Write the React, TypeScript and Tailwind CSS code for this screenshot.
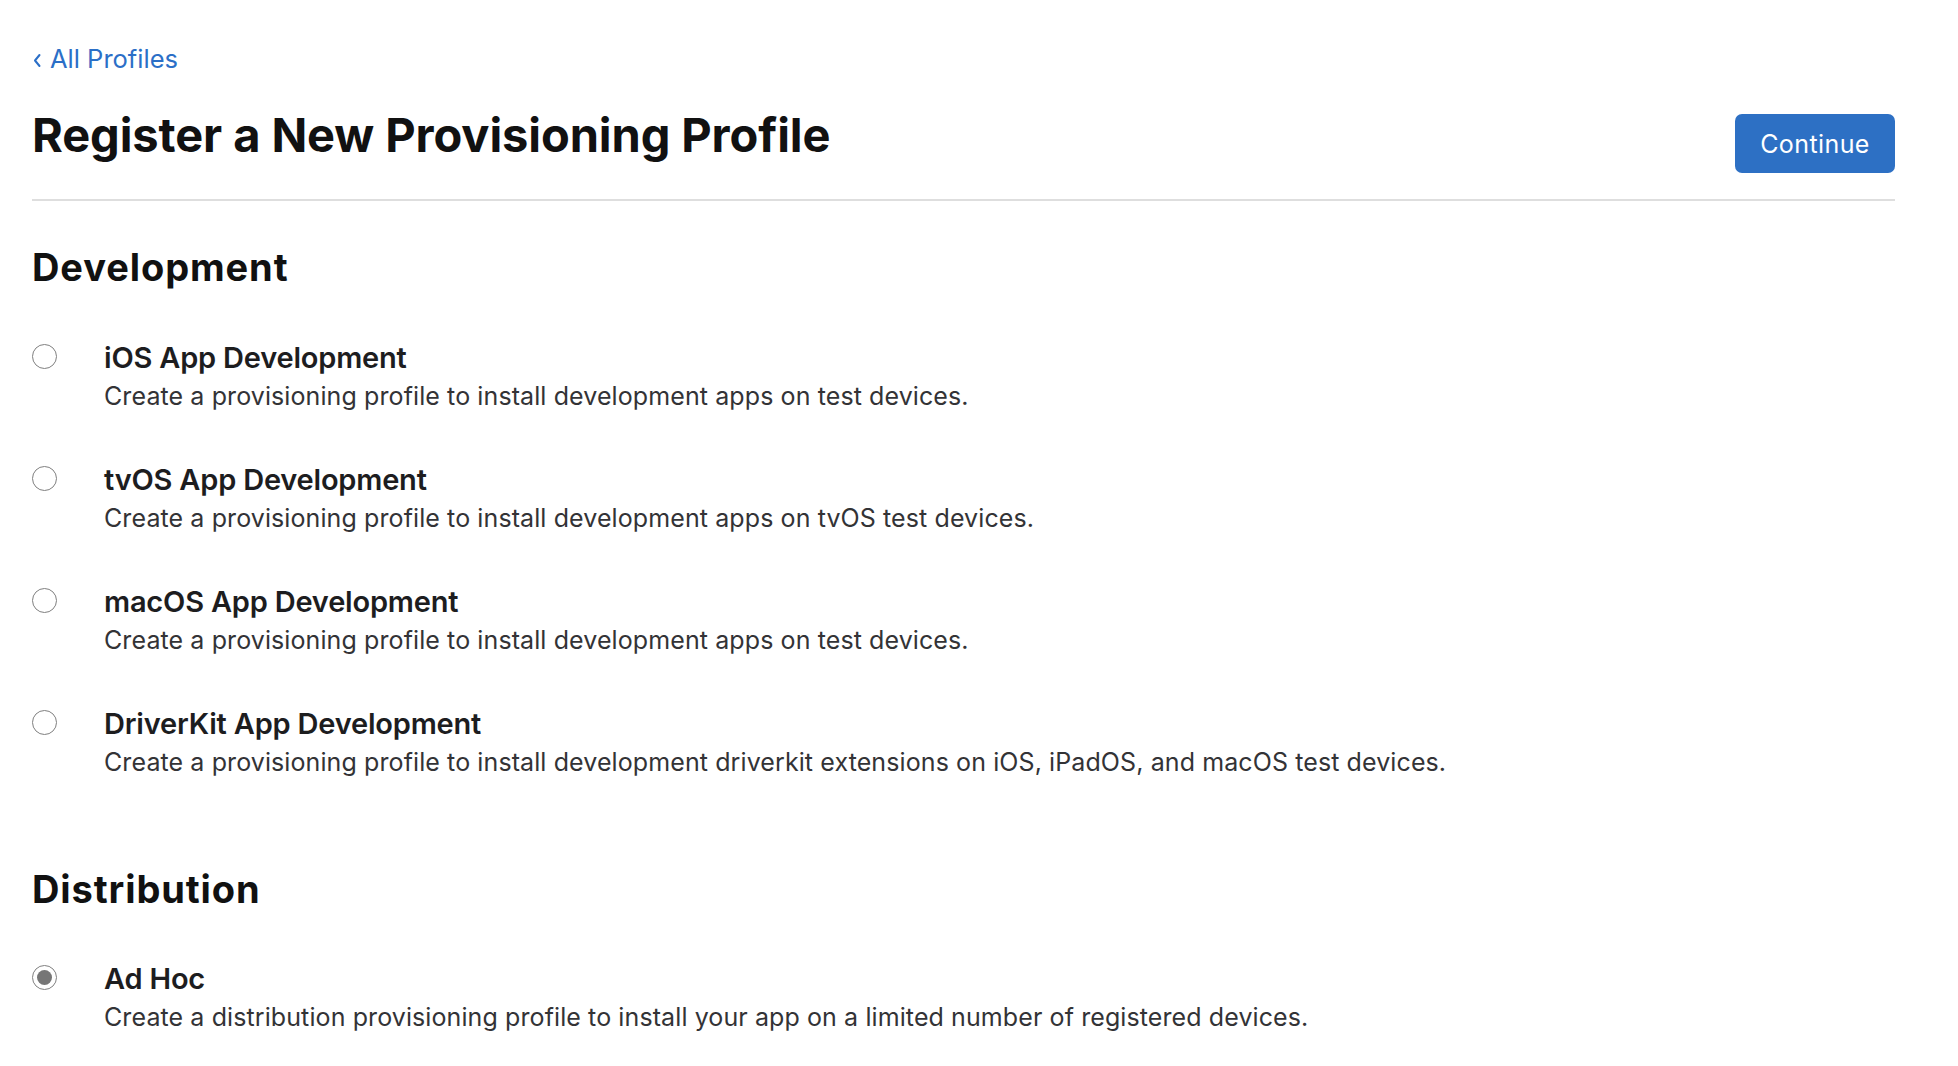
import React from "react";

type Option = { title: string; desc: string; checked?: boolean };

const dev: Option[] = [
  { title: "iOS App Development", desc: "Create a provisioning profile to install development apps on test devices." },
  { title: "tvOS App Development", desc: "Create a provisioning profile to install development apps on tvOS test devices." },
  { title: "macOS App Development", desc: "Create a provisioning profile to install development apps on test devices." },
  { title: "DriverKit App Development", desc: "Create a provisioning profile to install development driverkit extensions on iOS, iPadOS, and macOS test devices." },
];

const dist: Option[] = [
  { title: "Ad Hoc", desc: "Create a distribution provisioning profile to install your app on a limited number of registered devices.", checked: true },
];

function Radio({ checked }: { checked?: boolean }) {
  return (
    <div className="mt-[4px] flex h-[25px] w-[25px] shrink-0 items-center justify-center rounded-full border-[1.5px] border-[#7f7f7f] bg-white">
      {checked && <div className="h-[15px] w-[15px] rounded-full bg-[#767676]" />}
    </div>
  );
}

function Row({ o }: { o: Option }) {
  return (
    <div className="flex">
      <div className="w-[72px] shrink-0">
        <Radio checked={o.checked} />
      </div>
      <div className="flex flex-col">
        <div className="text-[29px] font-semibold leading-[36px] tracking-[-0.2px] text-[#1d1d1f]">{o.title}</div>
        <div className="mt-[4px] text-[25px] font-normal leading-[32px] tracking-[0.1px] text-[#333336]">{o.desc}</div>
      </div>
    </div>
  );
}

export default function App() {
  return (
    <div className="min-h-screen bg-white pl-[32px] pr-[63px] pt-[44px]" style={{ fontFamily: "Inter, 'Noto Sans', sans-serif" }}>
      <a className="flex items-center gap-[8px] text-[25.5px] leading-[30px] tracking-[0px] text-[#2b6fc7]" href="#">
        <svg width="10" height="16" viewBox="0 0 10 16" fill="none" className="mt-[2px]">
          <path d="M7.5 3 L3 8.5 L7.5 14" stroke="#2b6fc7" strokeWidth="2" strokeLinecap="round" strokeLinejoin="round" />
        </svg>
        <span>All Profiles</span>
      </a>
      <div className="mt-[33px] flex items-start justify-between border-b-2 border-[#dedede] pb-[26px]">
        <h1 className="text-[47px] font-bold leading-[56px] tracking-[-0.1px] text-[#111111]">Register a New Provisioning Profile</h1>
        <button className="mt-[7px] flex h-[59px] w-[160px] items-center justify-center rounded-[7px] bg-[#2d70c4] text-[25px] leading-[30px] tracking-[0.4px] text-white">
          Continue
        </button>
      </div>

      <h2 className="mt-[44px] text-[38px] font-bold leading-[44px] tracking-[0.9px] text-[#111111]">Development</h2>
      <div className="mt-[51px] flex flex-col gap-[50px]">
        {dev.map((o) => (
          <Row key={o.title} o={o} />
        ))}
      </div>

      <h2 className="mt-[89px] text-[38px] font-bold leading-[44px] tracking-[0.9px] text-[#111111]">Distribution</h2>
      <div className="mt-[50px] flex flex-col gap-[50px]">
        {dist.map((o) => (
          <Row key={o.title} o={o} />
        ))}
      </div>
    </div>
  );
}
